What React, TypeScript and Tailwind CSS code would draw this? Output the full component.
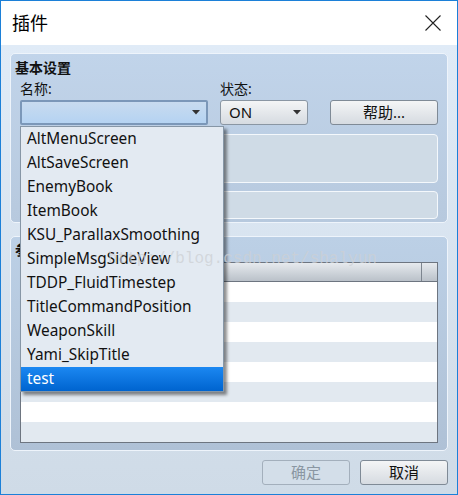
import React from 'react';

const plugins = [
  'AltMenuScreen',
  'AltSaveScreen',
  'EnemyBook',
  'ItemBook',
  'KSU_ParallaxSmoothing',
  'SimpleMsgSideView',
  'TDDP_FluidTimestep',
  'TitleCommandPosition',
  'WeaponSkill',
  'Yami_SkipTitle',
  'test',
];

const font = { fontFamily: '"Noto Sans", "Noto Sans CJK SC", sans-serif' };

function Arrow() {
  return (
    <svg width="8" height="5" viewBox="0 0 8 5" className="shrink-0">
      <path d="M0 0h8L4 4.5z" fill="#333" />
    </svg>
  );
}

function Btn({ children, disabled = false, className = '' }: { children: React.ReactNode; disabled?: boolean; className?: string }) {
  return (
    <div
      className={
        'h-[25px] rounded-[3px] border flex items-center justify-center text-[15px] ' +
        (disabled
          ? 'border-[#a3afbc] bg-[#d3dee9] text-[#8a96a2] '
          : 'border-[#7f8a96] bg-gradient-to-b from-[#f4f5f6] to-[#d6dbe1] text-[#111] ') +
        className
      }
    >
      {children}
    </div>
  );
}

export default function App() {
  return (
    <div className="w-[458px] h-[495px] border border-[#1c80d8] flex flex-col relative overflow-hidden text-[#111]" style={font}>
      {/* Title bar */}
      <div className="h-[44px] bg-white flex items-center justify-between pl-[11px] pr-[16px] shrink-0">
        <span className="text-[18px] text-black">插件</span>
        <svg width="16" height="16" viewBox="0 0 16 16">
          <path d="M0.5 0.5l15 15M15.5 0.5l-15 15" stroke="#222" strokeWidth="1.1" />
        </svg>
      </div>

      {/* Body */}
      <div className="flex-1 bg-gradient-to-b from-[#e0ebf7] to-[#cfdbe7] px-[9px] pt-[8px] flex flex-col">
        {/* Group 1 */}
        <div className="h-[170px] rounded-[5px] border border-[#eef4fb] bg-gradient-to-b from-[#c1d4ea] to-[#b7c9de] pl-[9px] pr-[9px] pt-[4px] flex flex-col">
          <div className="text-[14px] font-bold leading-[20px] -ml-[5px]">基本设置</div>
          <div className="flex mt-[1px]">
            <div className="w-[188px] flex flex-col">
              <span className="text-[14px] leading-[20px]">名称:</span>
              <div className="mt-[1px] h-[25px] rounded-[2px] border-2 border-[#7b97b8] bg-gradient-to-b from-[#c8dbef] to-[#b5d3f2] flex items-center justify-end pr-[6px]">
                <Arrow />
              </div>
            </div>
            <div className="w-[88px] ml-[12px] flex flex-col">
              <span className="text-[14px] leading-[20px]">状态:</span>
              <div className="mt-[1px] h-[25px] rounded-[3px] border border-[#8a96a3] bg-gradient-to-b from-[#f4f5f6] to-[#d6dbe1] flex items-center justify-between pl-[8px] pr-[6px]">
                <span className="text-[15px]">ON</span>
                <Arrow />
              </div>
            </div>
            <div className="flex-1 ml-[22px] flex flex-col justify-end">
              <Btn>帮助...</Btn>
            </div>
          </div>
          <div className="mt-[9px] h-[49px] rounded-[4px] border border-[#f4f8fc] bg-[#cfdbe6]" />
          <div className="mt-[8px] h-[28px] rounded-[4px] border border-[#f4f8fc] bg-[#cfdbe6]" />
        </div>

        {/* Group 2 */}
        <div className="mt-[13px] h-[215px] rounded-[5px] border border-[#eef4fb] bg-gradient-to-b from-[#bcd0e6] to-[#afc1d6] px-[9px] pt-[3px] flex flex-col">
          <div className="text-[14px] font-bold leading-[20px] -ml-[5px]">参数</div>
          <div className="mt-[2px] h-[181px] border border-[#6d7580] bg-white flex flex-col">
            <div className="h-[19px] flex border-b border-[#6d7580] bg-gradient-to-b from-[#e6eaee] to-[#bac1c9]">
              <div className="w-[401px] border-r border-[#7d858f]" />
              <div className="flex-1" />
            </div>
            {[0, 1, 2, 3, 4, 5, 6, 7].map((i) => (
              <div key={i} className={'h-[20px] ' + (i % 2 === 0 ? 'bg-white' : 'bg-[#e2e9f0]')} />
            ))}
          </div>
        </div>

        {/* Footer buttons */}
        <div className="flex justify-end gap-[10px] mt-[9px]">
          <Btn disabled className="w-[88px]">确定</Btn>
          <Btn className="w-[88px]">取消</Btn>
        </div>
      </div>

      {/* Dropdown list */}
      <div className="absolute left-[19px] top-[125px] w-[204px] border border-[#8696a6] bg-[#e3eaf2] shadow-[3px_3px_3px_rgba(0,0,0,0.45)]">
        {plugins.map((p) => (
          <div
            key={p}
            className={
              'h-[24px] flex items-center pl-[6px] text-[15.4px] ' +
              (p === 'test' ? 'bg-gradient-to-b from-[#1b88f2] to-[#0064cf] text-white' : 'text-[#111]')
            }
          >
            {p}
          </div>
        ))}
      </div>

      {/* Watermark */}
      <div
        className="absolute left-[107px] top-[248px] text-[16px] leading-[20px] text-[rgba(205,208,212,0.75)] pointer-events-none"
        style={{ fontFamily: '"Liberation Mono", monospace' }}
      >
        http://blog.csdn.net/shalyun
      </div>
    </div>
  );
}
